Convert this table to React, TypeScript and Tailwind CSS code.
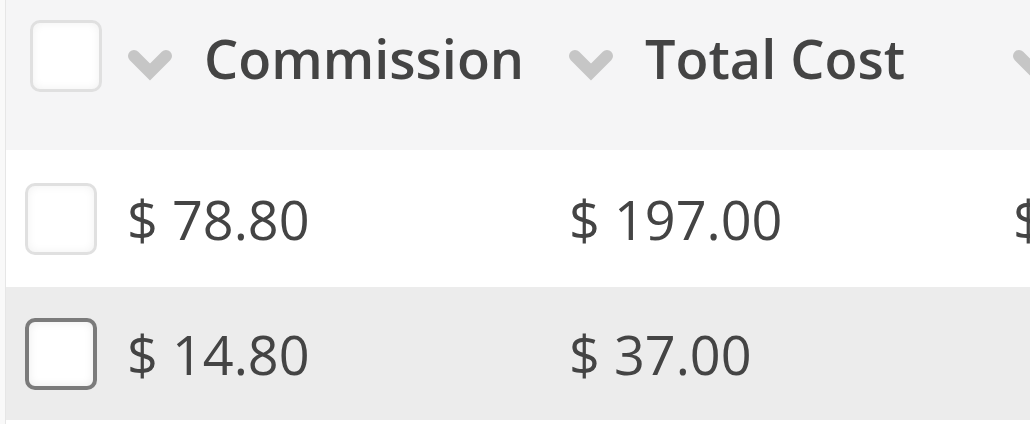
const font = { fontFamily: '"Open Sans", "Liberation Sans", sans-serif' };

function Chevron() {
  return (
    <svg width="46" height="32" viewBox="0 0 46 32" className="mt-[49px] shrink-0">
      <polyline
        points="7,7 23,23 39,7"
        fill="none"
        stroke="#c6c6c6"
        strokeWidth="12"
        strokeLinecap="round"
        strokeLinejoin="miter"
      />
    </svg>
  );
}

function Checkbox({ dark }: { dark?: boolean }) {
  return (
    <div
      className={
        dark
          ? "h-[72px] w-[72px] rounded-[10px] border-[4px] border-[#7b7b7b] bg-white shadow-[inset_0_0_10px_rgba(0,0,0,0.08)]"
          : "h-[72px] w-[72px] rounded-[10px] border-[3px] border-[#e0e0e0] bg-white shadow-[inset_0_0_10px_rgba(0,0,0,0.06)]"
      }
    />
  );
}

function HeadCell({ label, className }: { label: string; className: string }) {
  return (
    <div className={`flex items-start gap-[31px] pl-[20px] ${className}`}>
      <Chevron />
      <span className="mt-[31px] whitespace-nowrap text-[54px] font-semibold leading-none text-[#444]">
        {label}
      </span>
    </div>
  );
}

const rows = [
  { commission: "$ 78.80", total: "$ 197.00", next: "$", bg: "bg-white", h: "h-[137px]", dark: false },
  { commission: "$ 14.80", total: "$ 37.00", next: "", bg: "bg-[#ececec]", h: "h-[133px]", dark: true },
];

export default function App() {
  return (
    <div className="flex h-[424px] w-[1030px] overflow-hidden bg-[#fafafa]" style={font}>
      <div className="w-[6px] shrink-0 border-r border-[#e6e6e6] bg-[#f9f9f9]" />
      <div className="flex min-w-0 flex-1 flex-col">
        <div className="flex h-[150px] shrink-0 items-start bg-[#f5f5f6]">
          <div className="flex w-[101px] shrink-0 pl-[24px] pt-[20px]">
            <Checkbox />
          </div>
          <HeadCell label="Commission" className="w-[441px] shrink-0" />
          <HeadCell label="Total Cost" className="w-[444px] shrink-0" />
          <HeadCell label="" className="flex-1" />
        </div>
        {rows.map((r, i) => (
          <div key={i} className={`flex shrink-0 items-center ${r.bg} ${r.h}`}>
            <div className="flex w-[101px] shrink-0 pl-[19px]">
              <Checkbox dark={r.dark} />
            </div>
            <div className="w-[441px] shrink-0 pl-[20px] text-[54px] leading-none text-[#444]">{r.commission}</div>
            <div className="w-[444px] shrink-0 pl-[21px] text-[54px] leading-none text-[#444]">{r.total}</div>
            <div className="flex-1 whitespace-nowrap pl-[21px] text-[54px] leading-none text-[#444]">{r.next}</div>
          </div>
        ))}
        <div className="flex-1 bg-white" />
      </div>
    </div>
  );
}
